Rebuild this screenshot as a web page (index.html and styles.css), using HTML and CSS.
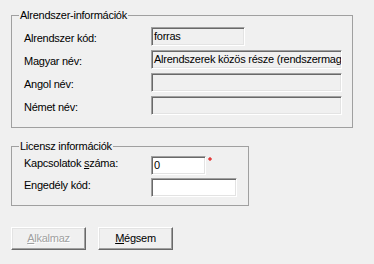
FILE: index.html
```html
<!DOCTYPE html>
<html lang="hu">
<head>
<meta charset="utf-8">
<title>Alrendszer</title>
<link rel="stylesheet" href="styles.css">
</head>
<body>
<div class="form">
  <div class="group group-sys">
    <span class="group-title">Alrendszer-információk</span>
    <div class="rows rows-sys">
      <div class="row">
        <span class="label">Alrendszer kód:</span>
        <div class="field field-short disabled">forras</div>
      </div>
      <div class="row">
        <span class="label">Magyar név:</span>
        <div class="field field-long disabled">Alrendszerek közös része (rendszermag</div>
      </div>
      <div class="row">
        <span class="label">Angol név:</span>
        <div class="field field-long disabled"></div>
      </div>
      <div class="row">
        <span class="label">Német név:</span>
        <div class="field field-long disabled"></div>
      </div>
    </div>
  </div>

  <div class="group group-lic">
    <span class="group-title">Licensz információk</span>
    <div class="rows rows-lic">
      <div class="row">
        <span class="label">Kapcsolatok <u>s</u>záma:</span>
        <div class="field field-count">0</div>
        <svg class="required" width="4" height="4" viewBox="0 0 4 4"><path d="M1.5 0h1v4h-1zM0 1.5h4v1h-4z" fill="#e00000"/></svg>
      </div>
      <div class="row">
        <span class="label">Engedély kód:</span>
        <div class="field field-code"></div>
      </div>
    </div>
  </div>

  <div class="buttons">
    <button class="btn btn-disabled" type="button" disabled><u>A</u>lkalmaz</button>
    <button class="btn" type="button"><u>M</u>égsem</button>
  </div>
</div>
</body>
</html>
```
FILE: styles.css
```css
html, body {
  margin: 0;
  padding: 0;
  background: #f0f0f0;
}
body {
  font-family: "Liberation Sans", Arial, sans-serif;
  font-size: 11px;
  line-height: 13px;
  letter-spacing: -0.25px;
  color: #000;
}
.form {
  padding: 15px 0 0 11px;
  display: flex;
  flex-direction: column;
  align-items: flex-start;
}
.group {
  position: relative;
  border: 1px solid #a0a0a0;
  box-sizing: border-box;
}
.group-title {
  position: absolute;
  top: -7px;
  left: 7px;
  padding: 0 1px;
  background: #f0f0f0;
  white-space: nowrap;
}
.group-sys {
  width: 342px;
  padding: 11px 0 12px 12px;
}
.group-lic {
  width: 238px;
  margin-top: 18px;
  padding: 9px 0 8px 12px;
}
.rows {
  display: flex;
  flex-direction: column;
}
.rows-sys { gap: 4px; }
.rows-lic { gap: 3px; }
.row {
  display: flex;
  align-items: flex-start;
  height: 19px;
}
.label {
  width: 127px;
  flex: none;
  white-space: nowrap;
}
.rows-sys .label { padding-top: 5px; }
.rows-lic .label { padding-top: 1px; }
.field {
  box-sizing: border-box;
  height: 19px;
  flex: none;
  border: 1px solid;
  border-color: #a0a0a0 #ffffff #ffffff #a0a0a0;
  box-shadow: inset 1px 1px 0 #696969, inset -1px -1px 0 #e3e3e3;
  padding: 2px 1px 0 2px;
  background: #fff;
  white-space: nowrap;
  overflow: hidden;
}
.field.disabled { background: #f0f0f0; }
.field-short { width: 94px; }
.field-long { width: 191px; }
.field-count { width: 55px; }
.field-code { width: 86px; }
.required {
  display: block;
  margin: 1px 0 0 2px;
}
.buttons {
  display: flex;
  gap: 12px;
  margin-top: 21px;
}
.btn {
  box-sizing: border-box;
  width: 75px;
  height: 23px;
  padding: 0;
  margin: 0;
  font: inherit;
  letter-spacing: inherit;
  line-height: 13px;
  color: #000;
  background: #f0f0f0;
  border: 1px solid;
  border-color: #ffffff #696969 #696969 #ffffff;
  box-shadow: inset -1px -1px 0 #a0a0a0, inset 1px 1px 0 #e3e3e3;
  text-align: center;
}
.btn-disabled {
  color: #a0a0a0;
  text-shadow: 1px 1px 0 #ffffff;
}
```
